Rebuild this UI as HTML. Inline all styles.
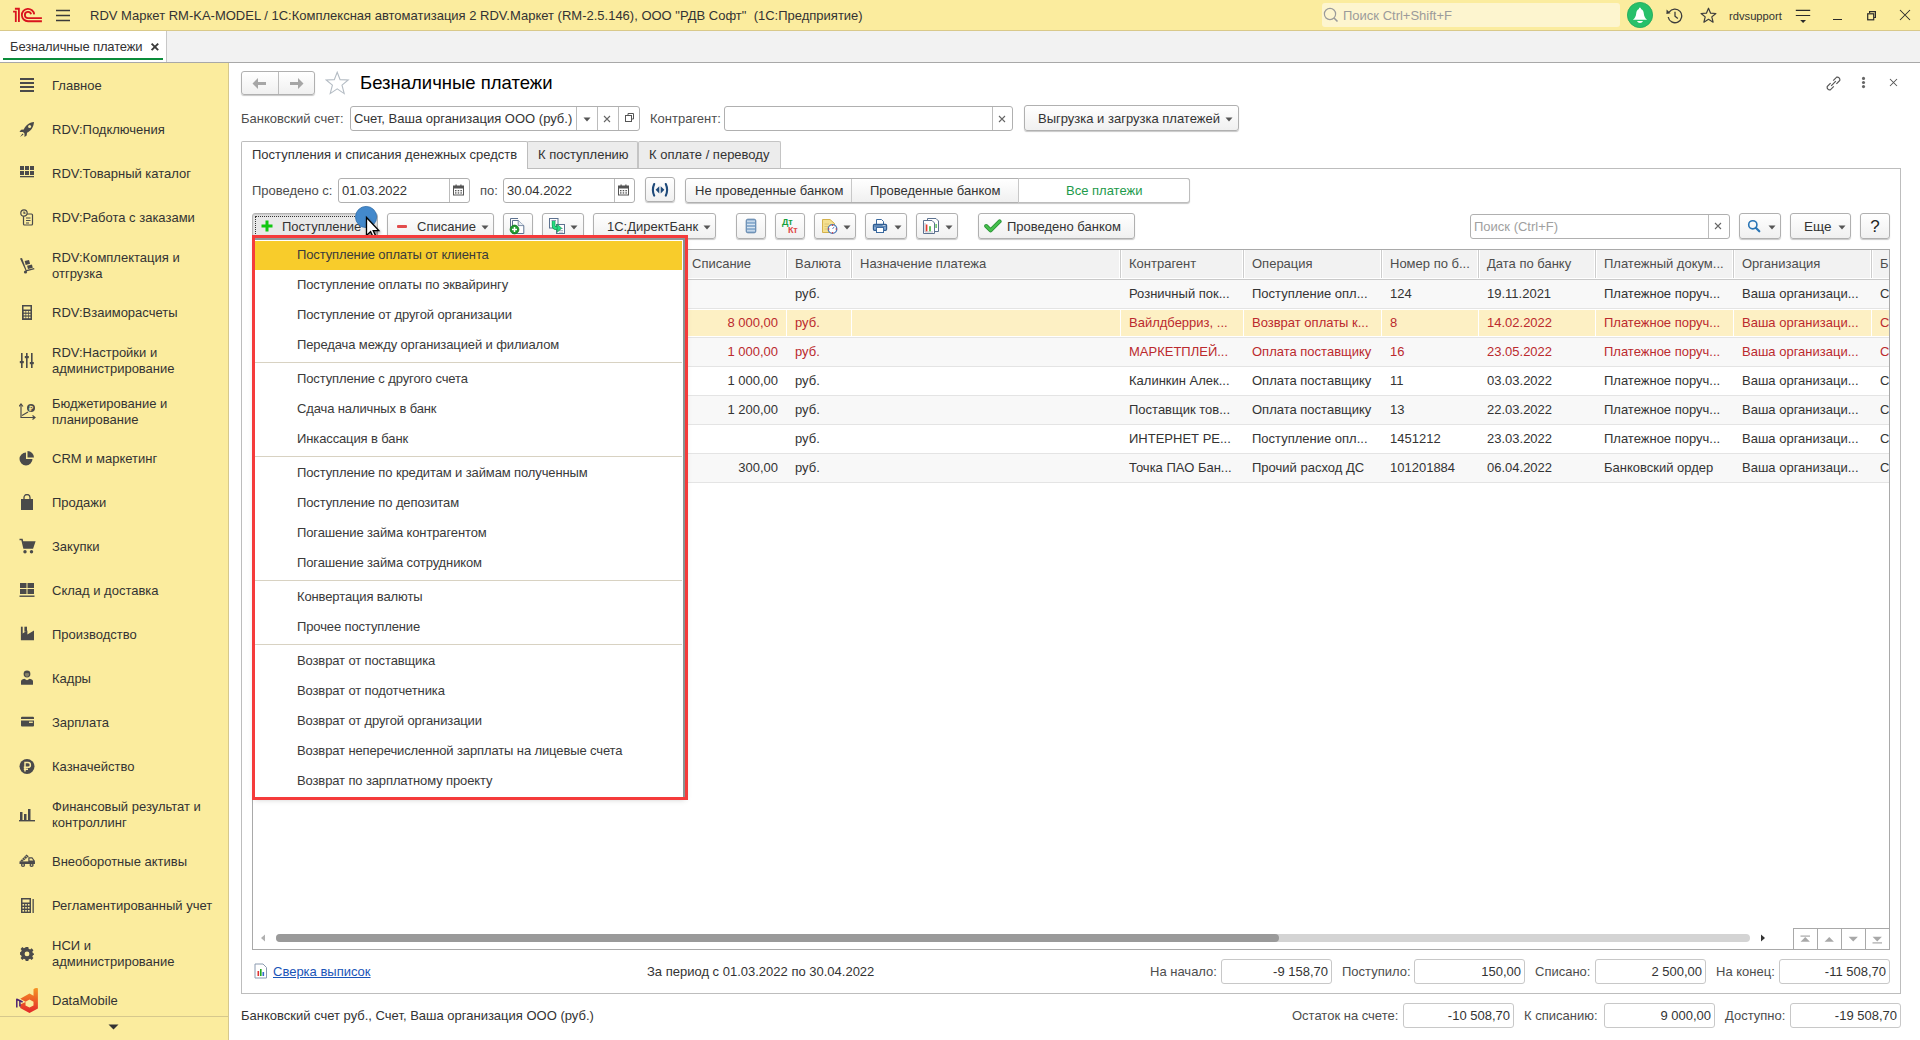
<!DOCTYPE html>
<html><head><meta charset="utf-8"><title>Безналичные платежи</title><style>
html,body{margin:0;padding:0;width:1920px;height:1040px;overflow:hidden;background:#fff;}
body{position:relative;font-family:"Liberation Sans",sans-serif;font-size:13px;color:#333;}
body>div{position:absolute;white-space:nowrap;}
</style></head><body>
<div style="left:0px;top:0px;width:1920px;height:30px;background:#fbec9e"></div>
<div style="left:0px;top:30px;width:1920px;height:1px;background:#d9c98a"></div>
<svg style="position:absolute;left:8px;top:2px;" width="40" height="26" viewBox="0 0 40 26">
<g fill="none" stroke="#d9141e" stroke-width="1.8" stroke-linecap="butt">
<path d="M5.1 9.7 H7.8 V20.1"/>
<path d="M6.9 6.75 H10.9 V20.1"/>
<path d="M26.2 12.3 A6.2 6.2 0 1 0 20 19.25 H33.9"/>
<path d="M23.1 12.3 A3.15 3.15 0 1 0 20 16.15 H33.9"/>
</g></svg>
<svg style="position:absolute;left:55px;top:9px;" width="16" height="13" viewBox="0 0 16 13"><g stroke="#3a3a3a" stroke-width="1.4"><path d="M1 1.5H15M1 6.5H15M1 11.5H15"/></g></svg>
<div style="left:90px;top:5.5px;line-height:20px;color:#333333;white-space:pre;font-size:13px">RDV Маркет RM-KA-MODEL / 1С:Комплексная автоматизация 2 RDV.Маркет (RM-2.5.146), ООО &quot;РДВ Софт&quot;  (1С:Предприятие)</div>
<div style="left:1322px;top:3px;width:298px;height:24px;background:#fdf5cf;border-radius:3px"></div>
<svg style="position:absolute;left:1323px;top:7px;" width="16" height="16" viewBox="0 0 16 16"><circle cx="7" cy="7" r="5.6" fill="none" stroke="#9a9a9a" stroke-width="1.2"/><path d="M11 11 L14.5 14.5" stroke="#9a9a9a" stroke-width="1.6"/></svg>
<div style="left:1343px;top:5.5px;line-height:20px;color:#9b9b9b;font-size:13px">Поиск Ctrl+Shift+F</div>
<svg style="position:absolute;left:1627px;top:2px;" width="26" height="26" viewBox="0 0 26 26"><circle cx="13" cy="13" r="12.6" fill="#27c06a" stroke="#1fa85a" stroke-width="0.8"/><path d="M12.9 5.4 C12.2 5.4 11.9 6.2 11.9 7.1 C10.1 7.8 9.4 9.5 9.2 11.5 C9 14.5 7.6 16.5 5.9 17.8 H20.1 C18.4 16.5 17 14.5 16.8 11.5 C16.6 9.5 15.9 7.8 14 7.1 C14 6.2 13.6 5.4 12.9 5.4Z" fill="#fff"/><path d="M10 19.1 H16 C15.5 20.4 14.3 20.9 13 20.9 C11.7 20.9 10.5 20.4 10 19.1Z" fill="#fff"/></svg>
<svg style="position:absolute;left:1665px;top:7px;" width="19" height="17" viewBox="0 0 19 17"><path d="M4.2 5.2 A6.8 6.8 0 1 1 3.2 10" fill="none" stroke="#3c3c3c" stroke-width="1.3"/><path d="M1.6 2.6 L5.6 6.2 L1.4 7 Z" fill="#3c3c3c"/><path d="M10 4.8 V9.2 L12.8 11.6" fill="none" stroke="#3c3c3c" stroke-width="1.3"/></svg>
<svg style="position:absolute;left:1700px;top:7px;" width="17" height="17" viewBox="0 0 17 17"><path d="M8.5 1.2 L10.6 6.2 L15.9 6.5 L11.8 9.9 L13.1 15.2 L8.5 12.3 L3.9 15.2 L5.2 9.9 L1.1 6.5 L6.4 6.2 Z" fill="none" stroke="#3c3c3c" stroke-width="1.2" stroke-linejoin="round"/></svg>
<div style="left:1729px;top:5.5px;line-height:20px;color:#333333;font-size:11.2px">rdvsupport</div>
<svg style="position:absolute;left:1795px;top:9px;" width="16" height="15" viewBox="0 0 16 15"><g stroke="#2a2a2a" stroke-width="1.2"><path d="M0.8 1.4 H15.2 M0.8 6.5 H15.2"/></g><path d="M5.2 11 H11 L8.1 14Z" fill="#2a2a2a"/></svg>
<div style="left:1833px;top:19px;width:9px;height:1px;background:#2a2a2a"></div>
<svg style="position:absolute;left:1866px;top:10px;" width="12" height="11" viewBox="0 0 12 11"><path d="M3.6 2.9 V1.7 H9.4 V7.5 H8.1" fill="none" stroke="#2a2a2a" stroke-width="1.2"/><rect x="1.7" y="3.8" width="6" height="6" fill="none" stroke="#2a2a2a" stroke-width="1.2"/></svg>
<svg style="position:absolute;left:1899px;top:9px;" width="12" height="12" viewBox="0 0 12 12"><path d="M1 1 L11 11 M11 1 L1 11" stroke="#2a2a2a" stroke-width="1.05"/></svg>
<div style="left:0px;top:31px;width:1920px;height:31px;background:#f2f2f2"></div>
<div style="left:0px;top:62px;width:1920px;height:1px;background:#a8a8a8"></div>
<div style="left:0px;top:31px;width:166px;height:31px;background:#fff"></div>
<div style="left:166px;top:31px;width:1px;height:31px;background:#c8c8c8"></div>
<div style="left:10px;top:36.5px;line-height:20px;color:#333333;font-size:13px;letter-spacing:-0.15px">Безналичные платежи</div>
<svg style="position:absolute;left:150px;top:42px;" width="10" height="10" viewBox="0 0 10 10"><path d="M1.6 1.6 L8.2 8.2 M8.2 1.6 L1.6 8.2" stroke="#3a3a3a" stroke-width="1.9"/></svg>
<div style="left:3px;top:58px;width:160px;height:2px;background:#0a8c3a"></div>
<div style="left:0px;top:63px;width:228px;height:977px;background:#fbec9e"></div>
<div style="left:228px;top:63px;width:1px;height:977px;background:#d6c88d"></div>
<div style="left:52px;top:76.0px;line-height:20px;color:#333333;font-size:13px">Главное</div>
<svg style="position:absolute;left:19px;top:77px;" width="17" height="17" viewBox="0 0 17 17"><g fill="#4a4a4a"><rect x="1" y="1" width="14" height="2"/><rect x="1" y="5" width="14" height="2"/><rect x="1" y="9" width="14" height="2"/><rect x="1" y="13" width="14" height="2"/></g></svg>
<div style="left:52px;top:120.0px;line-height:20px;color:#333333;font-size:13px">RDV:Подключения</div>
<svg style="position:absolute;left:19px;top:121px;" width="17" height="17" viewBox="0 0 17 17"><path d="M15 1 C10 1.5 6.5 4.5 4.8 8.5 L2 8.8 L0.5 11 L4 11 L5.5 12.5 L5.5 16 L7.7 14.5 L8 11.7 C12 10 14.5 6.5 15 1Z M3.5 12.5 L1 16 L4.5 13.5Z" fill="#4a4a4a"/><circle cx="10.6" cy="5.6" r="1.5" fill="#fbec9e"/></svg>
<div style="left:52px;top:164.0px;line-height:20px;color:#333333;font-size:13px">RDV:Товарный каталог</div>
<svg style="position:absolute;left:19px;top:165px;" width="17" height="17" viewBox="0 0 17 17"><g fill="#4a4a4a"><rect x="1" y="1" width="4" height="4"/><rect x="6" y="1" width="4" height="4"/><rect x="11" y="1" width="4" height="4"/><rect x="1" y="6" width="4" height="4"/><rect x="6" y="6" width="4" height="4"/><rect x="11" y="6" width="4" height="4"/><rect x="1" y="11" width="14" height="1.3"/></g></svg>
<div style="left:52px;top:208.0px;line-height:20px;color:#333333;font-size:13px">RDV:Работа с заказами</div>
<svg style="position:absolute;left:19px;top:209px;" width="17" height="17" viewBox="0 0 17 17"><g fill="none" stroke="#4a4a4a" stroke-width="1.2"><rect x="4.5" y="5" width="9" height="11" rx="1"/><circle cx="5" cy="4" r="3.2" fill="#fbec9e"/><path d="M5 2.5 V4.2 H6.5"/><path d="M7 9 H11.5 M7 11.5 H11.5 M7 14 H10"/></g></svg>
<div style="left:52px;top:250.0px;line-height:16px;color:#333333;font-size:13px">RDV:Комплектация и</div>
<div style="left:52px;top:266.0px;line-height:16px;color:#333333;font-size:13px">отгрузка</div>
<svg style="position:absolute;left:19px;top:257px;" width="17" height="17" viewBox="0 0 17 17"><g fill="#4a4a4a"><path d="M1 1.5 L3 1 L7.5 13 L15 11 L15.5 12.2 L7 14.5 Z"/><rect x="6" y="3.5" width="4.5" height="4" transform="rotate(-15 8 5)"/><rect x="8.5" y="8" width="5" height="3.5" transform="rotate(-15 11 10)"/><circle cx="6.5" cy="15" r="1.6"/></g></svg>
<div style="left:52px;top:303.0px;line-height:20px;color:#333333;font-size:13px">RDV:Взаиморасчеты</div>
<svg style="position:absolute;left:19px;top:304px;" width="17" height="17" viewBox="0 0 17 17"><g fill="#4a4a4a"><path d="M3 1 H13 V16 H3Z M4.5 2.5 V5.5 H11.5 V2.5Z"/></g><g fill="#fbec9e"><rect x="4.7" y="7" width="1.8" height="1.6"/><rect x="7.2" y="7" width="1.8" height="1.6"/><rect x="9.7" y="7" width="1.8" height="1.6"/><rect x="4.7" y="9.8" width="1.8" height="1.6"/><rect x="7.2" y="9.8" width="1.8" height="1.6"/><rect x="9.7" y="9.8" width="1.8" height="1.6"/><rect x="4.7" y="12.6" width="1.8" height="1.6"/><rect x="7.2" y="12.6" width="1.8" height="1.6"/><rect x="9.7" y="12.6" width="1.8" height="1.6"/></g></svg>
<div style="left:52px;top:345.0px;line-height:16px;color:#333333;font-size:13px">RDV:Настройки и</div>
<div style="left:52px;top:361.0px;line-height:16px;color:#333333;font-size:13px">администрирование</div>
<svg style="position:absolute;left:19px;top:352px;" width="17" height="17" viewBox="0 0 17 17"><g fill="#4a4a4a"><rect x="2" y="1" width="1.6" height="15"/><rect x="7" y="1" width="1.6" height="15"/><rect x="12" y="1" width="1.6" height="15"/><rect x="0.8" y="9" width="4" height="2.2"/><rect x="5.8" y="4" width="4" height="2.2"/><rect x="10.8" y="10" width="4" height="2.2"/></g></svg>
<div style="left:52px;top:396.0px;line-height:16px;color:#333333;font-size:13px">Бюджетирование и</div>
<div style="left:52px;top:412.0px;line-height:16px;color:#333333;font-size:13px">планирование</div>
<svg style="position:absolute;left:19px;top:403px;" width="17" height="17" viewBox="0 0 17 17"><g fill="none" stroke="#4a4a4a" stroke-width="1.2"><path d="M2 1 V14.5 H16"/><path d="M0 3.5 L2 1 L4 3.5"/><path d="M13.5 12.5 L16 14.5 L13.5 16.5"/><path d="M3 12.5 L9 9"/></g><circle cx="12" cy="5" r="4" fill="#4a4a4a"/><text x="12" y="7.5" font-size="7" text-anchor="middle" fill="#fbec9e" font-family="Liberation Sans" font-weight="bold">₽</text></svg>
<div style="left:52px;top:449.0px;line-height:20px;color:#333333;font-size:13px">CRM и маркетинг</div>
<svg style="position:absolute;left:19px;top:450px;" width="17" height="17" viewBox="0 0 17 17"><path d="M7 2.5 A6.5 6.5 0 1 0 13.5 9 L7 9 Z" fill="#4a4a4a"/><path d="M8.5 1 A6.5 6.5 0 0 1 15 7.5 L8.5 7.5Z" fill="#4a4a4a"/></svg>
<div style="left:52px;top:493.0px;line-height:20px;color:#333333;font-size:13px">Продажи</div>
<svg style="position:absolute;left:19px;top:494px;" width="17" height="17" viewBox="0 0 17 17"><path d="M2 5 H14 V16 H2Z" fill="#4a4a4a"/><path d="M5 7 V3.5 A3 3 0 0 1 11 3.5 V7" fill="none" stroke="#4a4a4a" stroke-width="1.3"/></svg>
<div style="left:52px;top:537.0px;line-height:20px;color:#333333;font-size:13px">Закупки</div>
<svg style="position:absolute;left:19px;top:538px;" width="17" height="17" viewBox="0 0 17 17"><path d="M0.5 1.5 H3 L5 10 H13.5 L15.5 4 H4" fill="none" stroke="#4a4a4a" stroke-width="1.6"/><path d="M4 4 H15.5 L13.5 10 H5.2Z" fill="#4a4a4a"/><circle cx="6" cy="13.8" r="1.7" fill="#4a4a4a"/><circle cx="12.5" cy="13.8" r="1.7" fill="#4a4a4a"/></svg>
<div style="left:52px;top:581.0px;line-height:20px;color:#333333;font-size:13px">Склад и доставка</div>
<svg style="position:absolute;left:19px;top:582px;" width="17" height="17" viewBox="0 0 17 17"><g fill="#4a4a4a"><rect x="1" y="1" width="6.5" height="5"/><rect x="8.5" y="1" width="6.5" height="5"/><rect x="1" y="7" width="6.5" height="5"/><rect x="8.5" y="7" width="6.5" height="5"/><rect x="0.5" y="13.5" width="15" height="1.4"/></g></svg>
<div style="left:52px;top:625.0px;line-height:20px;color:#333333;font-size:13px">Производство</div>
<svg style="position:absolute;left:19px;top:626px;" width="17" height="17" viewBox="0 0 17 17"><g fill="#4a4a4a"><rect x="1.9" y="0.7" width="1.8" height="8"/><rect x="5.4" y="0.7" width="2.6" height="5"/><path d="M1.9 14.3 V8.4 L8.4 4.4 V8.4 L15 4.6 V14.3Z"/></g></svg>
<div style="left:52px;top:669.0px;line-height:20px;color:#333333;font-size:13px">Кадры</div>
<svg style="position:absolute;left:19px;top:670px;" width="17" height="17" viewBox="0 0 17 17"><circle cx="8" cy="4" r="3.4" fill="#4a4a4a"/><path d="M2 14.2 V11.6 Q2 9.3 5.3 8.7 L8 10.2 L10.7 8.7 Q14 9.3 14 11.6 V14.2 Q14 14.7 13.5 14.7 H2.5 Q2 14.7 2 14.2Z" fill="#4a4a4a"/><path d="M6 3.6 Q8 2.4 10 3.6 V5 Q9.4 6.8 8 6.8 Q6.6 6.8 6 5Z" fill="#fbec9e" opacity="0.35"/></svg>
<div style="left:52px;top:713.0px;line-height:20px;color:#333333;font-size:13px">Зарплата</div>
<svg style="position:absolute;left:19px;top:714px;" width="17" height="17" viewBox="0 0 17 17"><rect x="2" y="2.8" width="13" height="9.8" rx="1" fill="#4a4a4a"/><rect x="2" y="5" width="13" height="1.5" fill="#fbec9e"/><rect x="10" y="7.6" width="3.8" height="1.3" fill="#fbec9e"/></svg>
<div style="left:52px;top:757.0px;line-height:20px;color:#333333;font-size:13px">Казначейство</div>
<svg style="position:absolute;left:19px;top:758px;" width="17" height="17" viewBox="0 0 17 17"><circle cx="8" cy="8.5" r="7.5" fill="#4a4a4a"/><path d="M6 13.5 V4.5 H9 A2.4 2.4 0 0 1 9 9.3 H4.8 M4.8 11.2 H9" fill="none" stroke="#fbec9e" stroke-width="1.5"/></svg>
<div style="left:52px;top:799.0px;line-height:16px;color:#333333;font-size:13px">Финансовый результат и</div>
<div style="left:52px;top:815.0px;line-height:16px;color:#333333;font-size:13px">контроллинг</div>
<svg style="position:absolute;left:19px;top:806px;" width="17" height="17" viewBox="0 0 17 17"><g fill="#4a4a4a"><rect x="1" y="6" width="2.5" height="9"/><rect x="5" y="8" width="2.5" height="7"/><rect x="9" y="3" width="2.5" height="12"/><rect x="0" y="14" width="16" height="1.4"/></g></svg>
<div style="left:52px;top:852.0px;line-height:20px;color:#333333;font-size:13px">Внеоборотные активы</div>
<svg style="position:absolute;left:19px;top:853px;" width="17" height="17" viewBox="0 0 17 17"><g fill="#4a4a4a"><path d="M0.8 8.6 L7.4 1.4 L9.8 3.3 L3.8 8.6Z"/><path d="M9.3 4.3 H13.3 L15.8 7.8 V11 H9.3Z"/><rect x="0.5" y="8.4" width="15.3" height="2.6"/><circle cx="4" cy="12" r="2.1"/><circle cx="12.6" cy="12" r="2.1"/></g><g stroke="#fbec9e" stroke-width="0.7"><path d="M3.2 6.4 L5 7.6 M4.8 4.7 L6.6 5.9 M6.4 3 L8.2 4.2"/></g><path d="M10.5 5.4 H12.8 L14.3 7.6 H10.5Z" fill="#fbec9e"/><circle cx="4" cy="12" r="0.8" fill="#fbec9e"/><circle cx="12.6" cy="12" r="0.8" fill="#fbec9e"/></svg>
<div style="left:52px;top:896.0px;line-height:20px;color:#333333;font-size:13px">Регламентированный учет</div>
<svg style="position:absolute;left:19px;top:897px;" width="17" height="17" viewBox="0 0 17 17"><path d="M2 1 H12 V16 H2Z" fill="#4a4a4a"/><rect x="3.5" y="2.5" width="7" height="3" fill="#fbec9e"/><g fill="#fbec9e"><rect x="3.5" y="7" width="1.6" height="1.6"/><rect x="6.2" y="7" width="1.6" height="1.6"/><rect x="8.9" y="7" width="1.6" height="1.6"/><rect x="3.5" y="10" width="1.6" height="1.6"/><rect x="6.2" y="10" width="1.6" height="1.6"/><rect x="8.9" y="10" width="1.6" height="1.6"/><rect x="3.5" y="13" width="1.6" height="1.6"/><rect x="6.2" y="13" width="1.6" height="1.6"/><rect x="8.9" y="13" width="1.6" height="1.6"/></g><rect x="13.5" y="2" width="1.3" height="14" fill="#4a4a4a"/></svg>
<div style="left:52px;top:938.0px;line-height:16px;color:#333333;font-size:13px">НСИ и</div>
<div style="left:52px;top:954.0px;line-height:16px;color:#333333;font-size:13px">администрирование</div>
<svg style="position:absolute;left:19px;top:945px;" width="17" height="17" viewBox="0 0 17 17"><g transform="translate(8 8.5) scale(0.87)"><path d="M-1.5 -7.5 H1.5 L1.9 -5.4 L3.6 -4.6 L5.3 -5.9 L7.4 -3.8 L6.1 -2.1 L6.8 -0.4 L8 0 V1.5 L6.8 1.9 L6.1 3.6 L7.4 5.3 L5.3 7.4 L3.6 6.1 L1.9 6.8 L1.5 8.5 H-1.5 L-1.9 6.8 L-3.6 6.1 L-5.3 7.4 L-7.4 5.3 L-6.1 3.6 L-6.8 1.9 L-8 1.5 V-1.5 L-6.8 -1.9 L-6.1 -3.6 L-7.4 -5.3 L-5.3 -7.4 L-3.6 -6.1 L-1.9 -6.8Z" fill="#4a4a4a"/><circle cx="0" cy="0.5" r="2.8" fill="#fbec9e"/></g></svg>
<div style="left:52px;top:991.0px;line-height:20px;color:#333333;font-size:13px">DataMobile</div>
<svg style="position:absolute;left:15px;top:986px;" width="25" height="28" viewBox="0 0 25 28"><defs><linearGradient id="dmg" x1="0" y1="0" x2="0" y2="1"><stop offset="0" stop-color="#f59424"/><stop offset="1" stop-color="#e3262a"/></linearGradient></defs><path d="M18.5 3.2 Q20.5 1.5 22.9 2.2 V22.5 L14.5 27 L5.2 22 V18.6 L10.5 16 V19.4 L14.5 21.6 L18.5 19.4 V15.8 L14.5 13.6 L10.5 15.8 L5.2 12.8 L14.5 7.5 L18.5 9.8Z" fill="url(#dmg)"/><g fill="none" stroke="#4e2270" stroke-width="1.5" stroke-linejoin="round"><path d="M1.8 21.5 V13.3 L7.6 16"/><path d="M4.9 20.5 V14.8"/></g></svg>
<div style="left:0px;top:1016px;width:228px;height:1px;background:#d6c88d"></div>
<svg style="position:absolute;left:108px;top:1024px;" width="12" height="7" viewBox="0 0 12 7"><path d="M0.5 0.5 H10.5 L5.5 5.5Z" fill="#333"/></svg>
<div style="left:241px;top:71px;width:74px;height:24px;border:1px solid #b0b0b0;border-radius:3px;background:linear-gradient(#ffffff,#f0f0f0);box-shadow:0 1px 1px rgba(0,0,0,0.22);box-sizing:border-box;"></div>
<div style="left:278px;top:72px;width:1px;height:22px;background:#bcbcbc"></div>
<svg style="position:absolute;left:252px;top:77px;" width="16" height="13" viewBox="0 0 16 13"><path d="M0.5 6.5 L6 1 V5 H14 V8 H6 V12Z" fill="#a6a6a6"/></svg>
<svg style="position:absolute;left:288px;top:77px;" width="16" height="13" viewBox="0 0 16 13"><path d="M15.5 6.5 L10 1 V5 H2 V8 H10 V12Z" fill="#a6a6a6"/></svg>
<svg style="position:absolute;left:325px;top:71px;" width="25" height="24" viewBox="0 0 25 24"><path d="M12.2 1.2 L15.1 8.6 L23.2 9 L17 14.1 L19.2 22.6 L12.2 17.9 L5.2 22.6 L7.4 14.1 L1.2 9 L9.3 8.6 Z" fill="none" stroke="#b4bcc4" stroke-width="1.1" stroke-linejoin="miter"/></svg>
<div style="left:360px;top:70.0px;line-height:26px;color:#000;font-size:18.5px">Безналичные платежи</div>
<svg style="position:absolute;left:1824px;top:74px;" width="19" height="19" viewBox="0 0 19 19"><g fill="none" stroke="#555" stroke-width="1.2"><path d="M7.2 11.8 L11.8 7.2"/><path d="M6.6 9.2 L3.2 12.6 A2.6 2.6 0 0 0 6.4 15.8 L9.8 12.4"/><path d="M9.2 6.6 L12.6 3.2 A2.6 2.6 0 0 1 15.8 6.4 L12.4 9.8"/></g></svg>
<svg style="position:absolute;left:1861px;top:75px;" width="5" height="15" viewBox="0 0 5 15"><circle cx="2.5" cy="3.4" r="1.55" fill="#666"/><circle cx="2.5" cy="7.5" r="1.55" fill="#666"/><circle cx="2.5" cy="11.6" r="1.55" fill="#666"/></svg>
<svg style="position:absolute;left:1889px;top:78px;" width="10" height="10" viewBox="0 0 10 10"><path d="M1 1 L8 8 M8 1 L1 8" stroke="#555" stroke-width="1.05"/></svg>
<div style="left:241px;top:108.5px;line-height:20px;color:#4d4d4d;font-size:13px">Банковский счет:</div>
<div style="left:350px;top:106px;width:290px;height:25px;border:1px solid #b0b0b0;border-radius:3px;background:#fff;box-sizing:border-box;"></div>
<div style="left:354px;top:108.5px;line-height:20px;color:#333333;font-size:13px">Счет, Ваша организация ООО (руб.)</div>
<div style="left:576px;top:107px;width:1px;height:23px;background:#bcbcbc"></div>
<div style="left:597px;top:107px;width:1px;height:23px;background:#bcbcbc"></div>
<div style="left:618px;top:107px;width:1px;height:23px;background:#bcbcbc"></div>
<svg style="position:absolute;left:583px;top:116.5px;" width="8" height="5" viewBox="0 0 8 5"><path d="M0.5 0.5 L7.5 0.5 L4 4.5 Z" fill="#555"/></svg>
<svg style="position:absolute;left:603px;top:115px;" width="8" height="8" viewBox="0 0 8 8"><path d="M1 1 L7 7 M7 1 L1 7" stroke="#666" stroke-width="1.1"/></svg>
<svg style="position:absolute;left:624px;top:112px;" width="11" height="11" viewBox="0 0 11 11"><g fill="none" stroke="#555" stroke-width="1"><rect x="1.5" y="3.5" width="6" height="6"/><path d="M4 3.5 V1.5 H9.5 V7 H7.5"/></g></svg>
<div style="left:650px;top:108.5px;line-height:20px;color:#4d4d4d;font-size:13px">Контрагент:</div>
<div style="left:724px;top:106px;width:289px;height:25px;border:1px solid #b0b0b0;border-radius:3px;background:#fff;box-sizing:border-box;"></div>
<div style="left:992px;top:107px;width:1px;height:23px;background:#bcbcbc"></div>
<svg style="position:absolute;left:998px;top:115px;" width="8" height="8" viewBox="0 0 8 8"><path d="M1 1 L7 7 M7 1 L1 7" stroke="#666" stroke-width="1.1"/></svg>
<div style="left:1024px;top:105px;width:215px;height:26px;border:1px solid #b0b0b0;border-radius:3px;background:linear-gradient(#ffffff,#f0f0f0);box-shadow:0 1px 1px rgba(0,0,0,0.22);box-sizing:border-box;"></div>
<div style="left:1038px;top:108.5px;line-height:20px;color:#333333;font-size:13px">Выгрузка и загрузка платежей</div>
<svg style="position:absolute;left:1225px;top:116.5px;" width="8" height="5" viewBox="0 0 8 5"><path d="M0.5 0.5 L7.5 0.5 L4 4.5 Z" fill="#555"/></svg>
<div style="left:527px;top:141px;width:111px;height:27px;background:#ececec;border:1px solid #c4c4c4;border-bottom:none;box-sizing:border-box;border-radius:2px 2px 0 0"></div>
<div style="left:638px;top:141px;width:143px;height:27px;background:#ececec;border:1px solid #c4c4c4;border-bottom:none;box-sizing:border-box;border-radius:2px 2px 0 0"></div>
<div style="left:241px;top:141px;width:287px;height:28px;background:#fff;border:1px solid #bdbdbd;border-bottom:none;box-sizing:border-box;border-radius:2px 2px 0 0"></div>
<div style="left:252px;top:144.5px;line-height:20px;color:#333333;font-size:13px">Поступления и списания денежных средств</div>
<div style="left:538px;top:144.5px;line-height:20px;color:#333333;font-size:13px">К поступлению</div>
<div style="left:649px;top:144.5px;line-height:20px;color:#333333;font-size:13px">К оплате / переводу</div>
<div style="left:781px;top:168px;width:1120px;height:1px;background:#bdbdbd"></div>
<div style="left:527px;top:168px;width:254px;height:1px;background:#bdbdbd"></div>
<div style="left:241px;top:168px;width:1px;height:826px;background:#bdbdbd"></div>
<div style="left:1900px;top:168px;width:1px;height:826px;background:#bdbdbd"></div>
<div style="left:241px;top:993px;width:1660px;height:1px;background:#bdbdbd"></div>
<div style="left:252px;top:180.5px;line-height:20px;color:#4d4d4d;font-size:13px">Проведено с:</div>
<div style="left:338px;top:178px;width:132px;height:25px;border:1px solid #b0b0b0;border-radius:3px;background:#fff;box-sizing:border-box;"></div>
<div style="left:342px;top:180.5px;line-height:20px;color:#333333;font-size:13px">01.03.2022</div>
<div style="left:449px;top:179px;width:1px;height:23px;background:#bcbcbc"></div>
<svg style="position:absolute;left:453px;top:184px;" width="11" height="12" viewBox="0 0 11 12"><g fill="#555"><rect x="0.5" y="2" width="10" height="9" fill="none" stroke="#555" stroke-width="1"/><rect x="0.5" y="2" width="10" height="2.5"/><rect x="2.5" y="0.5" width="1.2" height="2.5"/><rect x="7.3" y="0.5" width="1.2" height="2.5"/><rect x="2" y="6" width="1.5" height="1.3"/><rect x="4.7" y="6" width="1.5" height="1.3"/><rect x="7.4" y="6" width="1.5" height="1.3"/><rect x="2" y="8.3" width="1.5" height="1.3"/><rect x="4.7" y="8.3" width="1.5" height="1.3"/><rect x="7.4" y="8.3" width="1.5" height="1.3"/></g></svg>
<div style="left:480px;top:180.5px;line-height:20px;color:#4d4d4d;font-size:13px">по:</div>
<div style="left:503px;top:178px;width:132px;height:25px;border:1px solid #b0b0b0;border-radius:3px;background:#fff;box-sizing:border-box;"></div>
<div style="left:507px;top:180.5px;line-height:20px;color:#333333;font-size:13px">30.04.2022</div>
<div style="left:614px;top:179px;width:1px;height:23px;background:#bcbcbc"></div>
<svg style="position:absolute;left:618px;top:184px;" width="11" height="12" viewBox="0 0 11 12"><g fill="#555"><rect x="0.5" y="2" width="10" height="9" fill="none" stroke="#555" stroke-width="1"/><rect x="0.5" y="2" width="10" height="2.5"/><rect x="2.5" y="0.5" width="1.2" height="2.5"/><rect x="7.3" y="0.5" width="1.2" height="2.5"/><rect x="2" y="6" width="1.5" height="1.3"/><rect x="4.7" y="6" width="1.5" height="1.3"/><rect x="7.4" y="6" width="1.5" height="1.3"/><rect x="2" y="8.3" width="1.5" height="1.3"/><rect x="4.7" y="8.3" width="1.5" height="1.3"/><rect x="7.4" y="8.3" width="1.5" height="1.3"/></g></svg>
<div style="left:645px;top:177px;width:30px;height:25px;border:1px solid #b0b0b0;border-radius:3px;background:linear-gradient(#ffffff,#f0f0f0);box-shadow:0 1px 1px rgba(0,0,0,0.22);box-sizing:border-box;"></div>
<svg style="position:absolute;left:649px;top:182px;" width="22" height="16" viewBox="0 0 22 16"><g fill="none" stroke="#1f4a7a" stroke-width="2.1" stroke-linecap="round"><path d="M5.2 2 Q2.6 7.8 5.2 13.6"/><path d="M16.8 2 Q19.4 7.8 16.8 13.6"/></g><path d="M6.6 7.8 L10.3 4.2 V11.4Z M15.4 7.8 L11.7 4.2 V11.4Z" fill="#1f4a7a"/></svg>
<div style="left:685px;top:178px;width:505px;height:25px;border:1px solid #b0b0b0;border-radius:3px;background:linear-gradient(#ffffff,#f0f0f0);box-shadow:0 1px 1px rgba(0,0,0,0.22);box-sizing:border-box;"></div>
<div style="left:851px;top:179px;width:1px;height:23px;background:#c8c8c8"></div>
<div style="left:1018px;top:178px;width:172px;height:25px;background:#fff;border:1px solid #bdbdbd;border-left:1px solid #c8c8c8;border-radius:0 3px 3px 0;box-sizing:border-box"></div>
<div style="left:695px;top:180.5px;line-height:20px;color:#333333;font-size:13px">Не проведенные банком</div>
<div style="left:870px;top:180.5px;line-height:20px;color:#333333;font-size:13px">Проведенные банком</div>
<div style="left:1066px;top:180.5px;line-height:20px;color:#1d9a4b;font-size:13px">Все платежи</div>
<div style="left:252px;top:213px;width:126px;height:26px;border:1px solid #b5b5b5;border-radius:3px;background:#e9e9e9;box-sizing:border-box;box-shadow:inset 0 1px 2px rgba(0,0,0,0.15)"></div>
<div style="left:255px;top:216px;width:118px;height:22px;border:1px dotted #333;box-sizing:border-box"></div>
<svg style="position:absolute;left:261px;top:220px;" width="12" height="12" viewBox="0 0 12 12"><path d="M4.5 0.5 H7.5 V4.5 H11.5 V7.5 H7.5 V11.5 H4.5 V7.5 H0.5 V4.5 H4.5Z" fill="#11c811"/></svg>
<div style="left:282px;top:216.5px;line-height:20px;color:#333333;font-size:13px">Поступление</div>
<div style="left:387px;top:213px;width:107px;height:26px;border:1px solid #b0b0b0;border-radius:3px;background:linear-gradient(#ffffff,#f0f0f0);box-shadow:0 1px 1px rgba(0,0,0,0.22);box-sizing:border-box;"></div>
<div style="left:397px;top:225px;width:10px;height:3px;background:#e24b4b;border-radius:1px"></div>
<div style="left:417px;top:216.5px;line-height:20px;color:#333333;font-size:13px">Списание</div>
<svg style="position:absolute;left:481px;top:225px;" width="8" height="5" viewBox="0 0 8 5"><path d="M0.5 0.5 L7.5 0.5 L4 4.5 Z" fill="#555"/></svg>
<div style="left:503px;top:213px;width:30px;height:26px;border:1px solid #b0b0b0;border-radius:3px;background:linear-gradient(#ffffff,#f0f0f0);box-shadow:0 1px 1px rgba(0,0,0,0.22);box-sizing:border-box;"></div>
<svg style="position:absolute;left:508px;top:216px;" width="20" height="20" viewBox="0 0 20 20"><path d="M2.5 12 V2.5 H10" fill="none" stroke="#5d7290" stroke-width="1"/><path d="M4.5 4.5 H10.2 L15.8 9.6 V17.5 H4.5 Z" fill="#fff" stroke="#5d7290" stroke-width="1"/><path d="M10.2 4.5 V9.6 H15.8" fill="#e8edf3" stroke="#5d7290" stroke-width="0.8"/><circle cx="6.5" cy="13.5" r="4.4" fill="#1f9a2e" stroke="#157a22" stroke-width="0.8"/><path d="M6.5 11 V16 M4 13.5 H9" stroke="#fff" stroke-width="1.5"/></svg>
<div style="left:542px;top:213px;width:42px;height:26px;border:1px solid #b0b0b0;border-radius:3px;background:linear-gradient(#ffffff,#f0f0f0);box-shadow:0 1px 1px rgba(0,0,0,0.22);box-sizing:border-box;"></div>
<svg style="position:absolute;left:547px;top:216px;" width="20" height="20" viewBox="0 0 20 20"><rect x="2.5" y="2.5" width="8.5" height="9.5" fill="#fff" stroke="#5d7290"/><path d="M4.5 4.5 H9" stroke="#8a9ab0"/><rect x="9.5" y="8.5" width="8" height="9" fill="#fff" stroke="#5d7290"/><path d="M12 12.5 H16 M12 14.5 H16 M12 16.2 H16" stroke="#9aa8ba" stroke-width="0.8"/><path d="M6.6 5 V9.6 Q6.6 12.2 9.4 12.2 H10.5" fill="none" stroke="#169a52" stroke-width="3.6"/><path d="M6.6 5 V9.6 Q6.6 12.2 9.4 12.2 H10.5" fill="none" stroke="#26dc84" stroke-width="2.2"/><path d="M10.2 8.2 L14.6 12.2 L10.2 16.2 Z" fill="#26dc84" stroke="#169a52" stroke-width="0.8"/></svg>
<svg style="position:absolute;left:570px;top:225px;" width="8" height="5" viewBox="0 0 8 5"><path d="M0.5 0.5 L7.5 0.5 L4 4.5 Z" fill="#555"/></svg>
<div style="left:593px;top:213px;width:123px;height:26px;border:1px solid #b0b0b0;border-radius:3px;background:linear-gradient(#ffffff,#f0f0f0);box-shadow:0 1px 1px rgba(0,0,0,0.22);box-sizing:border-box;"></div>
<div style="left:607px;top:216.5px;line-height:20px;color:#333333;font-size:13px">1С:ДиректБанк</div>
<svg style="position:absolute;left:703px;top:225px;" width="8" height="5" viewBox="0 0 8 5"><path d="M0.5 0.5 L7.5 0.5 L4 4.5 Z" fill="#555"/></svg>
<div style="left:736px;top:213px;width:30px;height:26px;border:1px solid #b0b0b0;border-radius:3px;background:linear-gradient(#ffffff,#f0f0f0);box-shadow:0 1px 1px rgba(0,0,0,0.22);box-sizing:border-box;"></div>
<svg style="position:absolute;left:745px;top:218px;" width="12" height="16" viewBox="0 0 12 16"><rect x="1.2" y="1.2" width="9.6" height="13.6" rx="1.6" fill="#8caed0" stroke="#5b80a8" stroke-width="1"/><path d="M2 3.2 H10 M2 6.4 H10 M2 9.6 H10 M2 12.8 H10" stroke="#e8f0f8" stroke-width="0.9"/></svg>
<div style="left:775px;top:213px;width:30px;height:26px;border:1px solid #b0b0b0;border-radius:3px;background:linear-gradient(#ffffff,#f0f0f0);box-shadow:0 1px 1px rgba(0,0,0,0.22);box-sizing:border-box;"></div>
<div style="left:782px;top:217px;font-size:9px;line-height:10px;color:#14a03c;font-weight:bold;letter-spacing:-0.2px">Дт</div>
<div style="left:788px;top:225px;font-size:9px;line-height:10px;color:#e04848;font-weight:bold;letter-spacing:-0.2px">Кт</div>
<div style="left:814px;top:213px;width:42px;height:26px;border:1px solid #b0b0b0;border-radius:3px;background:linear-gradient(#ffffff,#f0f0f0);box-shadow:0 1px 1px rgba(0,0,0,0.22);box-sizing:border-box;"></div>
<svg style="position:absolute;left:820px;top:217px;" width="20" height="20" viewBox="0 0 20 20"><path d="M2.5 2.5 H10 L14.5 6.5 V15.5 H2.5 Z" fill="#f5e08f" stroke="#d4b24c" stroke-width="1"/><path d="M4.5 7 H9 M4.5 9.5 H8 M4.5 12 H7" stroke="#dcc070" stroke-width="0.9"/><circle cx="12.5" cy="12" r="4.3" fill="#fff" stroke="#4a78b8" stroke-width="1.3"/><g fill="#e03030"><circle cx="12.5" cy="8.3" r="0.7"/><circle cx="12.5" cy="15.7" r="0.7"/><circle cx="8.8" cy="12" r="0.7"/><circle cx="16.2" cy="12" r="0.7"/></g><path d="M12.5 12 L14.2 9.8" stroke="#4a78b8" stroke-width="0.9"/></svg>
<svg style="position:absolute;left:843px;top:225px;" width="8" height="5" viewBox="0 0 8 5"><path d="M0.5 0.5 L7.5 0.5 L4 4.5 Z" fill="#555"/></svg>
<div style="left:865px;top:213px;width:42px;height:26px;border:1px solid #b0b0b0;border-radius:3px;background:linear-gradient(#ffffff,#f0f0f0);box-shadow:0 1px 1px rgba(0,0,0,0.22);box-sizing:border-box;"></div>
<svg style="position:absolute;left:871px;top:217px;" width="18" height="18" viewBox="0 0 18 18"><path d="M5.5 2.5 H10.5 L12.5 4.5 V8 H5.5 Z" fill="#fff" stroke="#3b6aa0" stroke-width="1"/><rect x="2.4" y="7.4" width="13.2" height="6" rx="1.2" fill="#7fa4cf" stroke="#2f5d92" stroke-width="1.2"/><path d="M3.2 9 H14.8" stroke="#2f5d92" stroke-width="0.8"/><circle cx="12.2" cy="8.6" r="0.5" fill="#fff"/><circle cx="13.8" cy="8.6" r="0.5" fill="#fff"/><rect x="5.5" y="10.5" width="7" height="5" fill="#fff" stroke="#3b6aa0" stroke-width="1"/></svg>
<svg style="position:absolute;left:894px;top:225px;" width="8" height="5" viewBox="0 0 8 5"><path d="M0.5 0.5 L7.5 0.5 L4 4.5 Z" fill="#555"/></svg>
<div style="left:916px;top:213px;width:42px;height:26px;border:1px solid #b0b0b0;border-radius:3px;background:linear-gradient(#ffffff,#f0f0f0);box-shadow:0 1px 1px rgba(0,0,0,0.22);box-sizing:border-box;"></div>
<svg style="position:absolute;left:921px;top:216px;" width="20" height="20" viewBox="0 0 20 20"><path d="M6.5 2.5 H15 L17.5 5 V15.5 H6.5 Z" fill="#fff" stroke="#5d7290" stroke-width="1"/><path d="M2.5 4.5 H11 L13.5 7 V17.5 H2.5 Z" fill="#fff" stroke="#5d7290" stroke-width="1"/><path d="M4 7 V16 H12" fill="none" stroke="#8a96a8" stroke-width="0.6"/><rect x="4.8" y="8.5" width="1.6" height="6.8" fill="#e83a2a"/><rect x="8.2" y="10.2" width="1.6" height="5.1" fill="#3ab43a"/><rect x="14.5" y="8" width="1.2" height="4" fill="#3ab43a"/></svg>
<svg style="position:absolute;left:945px;top:225px;" width="8" height="5" viewBox="0 0 8 5"><path d="M0.5 0.5 L7.5 0.5 L4 4.5 Z" fill="#555"/></svg>
<div style="left:978px;top:213px;width:157px;height:26px;border:1px solid #b0b0b0;border-radius:3px;background:linear-gradient(#ffffff,#f0f0f0);box-shadow:0 1px 1px rgba(0,0,0,0.22);box-sizing:border-box;"></div>
<svg style="position:absolute;left:984px;top:218px;" width="18" height="15" viewBox="0 0 18 15"><path d="M2.2 8 L6.6 12.4 L15.6 3.4" fill="none" stroke="#2a9236" stroke-width="4" stroke-linejoin="round" stroke-linecap="round"/><path d="M2.2 8 L6.6 12.4 L15.6 3.4" fill="none" stroke="#45c04c" stroke-width="2.3" stroke-linejoin="round" stroke-linecap="round"/></svg>
<div style="left:1007px;top:216.5px;line-height:20px;color:#333333;font-size:13px">Проведено банком</div>
<div style="left:1470px;top:214px;width:260px;height:25px;border:1px solid #b0b0b0;border-radius:3px;background:#fff;box-sizing:border-box;"></div>
<div style="left:1474px;top:216.5px;line-height:20px;color:#a0a0a0;font-size:13px">Поиск (Ctrl+F)</div>
<div style="left:1708px;top:215px;width:1px;height:23px;background:#bcbcbc"></div>
<svg style="position:absolute;left:1714px;top:222px;" width="8" height="8" viewBox="0 0 8 8"><path d="M1 1 L7 7 M7 1 L1 7" stroke="#666" stroke-width="1.1"/></svg>
<div style="left:1739px;top:213px;width:42px;height:26px;border:1px solid #b0b0b0;border-radius:3px;background:linear-gradient(#ffffff,#f0f0f0);box-shadow:0 1px 1px rgba(0,0,0,0.22);box-sizing:border-box;"></div>
<svg style="position:absolute;left:1747px;top:219px;" width="14" height="14" viewBox="0 0 14 14"><circle cx="5.8" cy="5.8" r="4.1" fill="none" stroke="#2a75b5" stroke-width="1.6"/><path d="M8.8 8.8 L12.3 12.3" stroke="#2a75b5" stroke-width="2.2" stroke-linecap="round"/></svg>
<svg style="position:absolute;left:1768px;top:225px;" width="8" height="5" viewBox="0 0 8 5"><path d="M0.5 0.5 L7.5 0.5 L4 4.5 Z" fill="#555"/></svg>
<div style="left:1790px;top:213px;width:61px;height:26px;border:1px solid #b0b0b0;border-radius:3px;background:linear-gradient(#ffffff,#f0f0f0);box-shadow:0 1px 1px rgba(0,0,0,0.22);box-sizing:border-box;"></div>
<div style="left:1804px;top:216.5px;line-height:20px;color:#333333;font-size:13.5px">Еще</div>
<svg style="position:absolute;left:1838px;top:225px;" width="8" height="5" viewBox="0 0 8 5"><path d="M0.5 0.5 L7.5 0.5 L4 4.5 Z" fill="#555"/></svg>
<div style="left:1860px;top:213px;width:30px;height:26px;border:1px solid #b0b0b0;border-radius:3px;background:linear-gradient(#ffffff,#f0f0f0);box-shadow:0 1px 1px rgba(0,0,0,0.22);box-sizing:border-box;"></div>
<div style="left:1860px;top:216.5px;line-height:20px;width:30px;text-align:center;color:#222;font-size:17px">?</div>
<div style="left:252px;top:249px;width:1638px;height:701px;border:1px solid #a9a9a9;box-sizing:border-box;background:#fff"></div>
<div style="left:253px;top:250px;width:1636px;height:29px;background:#f2f2f2"></div>
<div style="left:253px;top:279px;width:1636px;height:1px;background:#c9c9c9"></div>
<div style="left:683px;top:250px;width:1px;height:28px;background:#ffffff"></div>
<div style="left:684px;top:250px;width:1px;height:29px;background:#cdcdcd"></div>
<div style="left:685px;top:250px;width:1px;height:28px;background:#ffffff"></div>
<div style="left:785px;top:250px;width:1px;height:28px;background:#ffffff"></div>
<div style="left:786px;top:250px;width:1px;height:29px;background:#cdcdcd"></div>
<div style="left:787px;top:250px;width:1px;height:28px;background:#ffffff"></div>
<div style="left:850px;top:250px;width:1px;height:28px;background:#ffffff"></div>
<div style="left:851px;top:250px;width:1px;height:29px;background:#cdcdcd"></div>
<div style="left:852px;top:250px;width:1px;height:28px;background:#ffffff"></div>
<div style="left:1119px;top:250px;width:1px;height:28px;background:#ffffff"></div>
<div style="left:1120px;top:250px;width:1px;height:29px;background:#cdcdcd"></div>
<div style="left:1121px;top:250px;width:1px;height:28px;background:#ffffff"></div>
<div style="left:1242px;top:250px;width:1px;height:28px;background:#ffffff"></div>
<div style="left:1243px;top:250px;width:1px;height:29px;background:#cdcdcd"></div>
<div style="left:1244px;top:250px;width:1px;height:28px;background:#ffffff"></div>
<div style="left:1380px;top:250px;width:1px;height:28px;background:#ffffff"></div>
<div style="left:1381px;top:250px;width:1px;height:29px;background:#cdcdcd"></div>
<div style="left:1382px;top:250px;width:1px;height:28px;background:#ffffff"></div>
<div style="left:1477px;top:250px;width:1px;height:28px;background:#ffffff"></div>
<div style="left:1478px;top:250px;width:1px;height:29px;background:#cdcdcd"></div>
<div style="left:1479px;top:250px;width:1px;height:28px;background:#ffffff"></div>
<div style="left:1594px;top:250px;width:1px;height:28px;background:#ffffff"></div>
<div style="left:1595px;top:250px;width:1px;height:29px;background:#cdcdcd"></div>
<div style="left:1596px;top:250px;width:1px;height:28px;background:#ffffff"></div>
<div style="left:1732px;top:250px;width:1px;height:28px;background:#ffffff"></div>
<div style="left:1733px;top:250px;width:1px;height:29px;background:#cdcdcd"></div>
<div style="left:1734px;top:250px;width:1px;height:28px;background:#ffffff"></div>
<div style="left:1870px;top:250px;width:1px;height:28px;background:#ffffff"></div>
<div style="left:1871px;top:250px;width:1px;height:29px;background:#cdcdcd"></div>
<div style="left:1872px;top:250px;width:1px;height:28px;background:#ffffff"></div>
<div style="left:253px;top:278px;width:1636px;height:1px;background:#ffffff"></div>
<div style="left:692px;top:253.5px;line-height:20px;color:#4d4d4d;font-size:13px;white-space:nowrap">Списание</div>
<div style="left:795px;top:253.5px;line-height:20px;color:#4d4d4d;font-size:13px;white-space:nowrap">Валюта</div>
<div style="left:860px;top:253.5px;line-height:20px;color:#4d4d4d;font-size:13px;white-space:nowrap">Назначение платежа</div>
<div style="left:1129px;top:253.5px;line-height:20px;color:#4d4d4d;font-size:13px;white-space:nowrap">Контрагент</div>
<div style="left:1252px;top:253.5px;line-height:20px;color:#4d4d4d;font-size:13px;white-space:nowrap">Операция</div>
<div style="left:1390px;top:253.5px;line-height:20px;color:#4d4d4d;font-size:13px;white-space:nowrap">Номер по б...</div>
<div style="left:1487px;top:253.5px;line-height:20px;color:#4d4d4d;font-size:13px;white-space:nowrap">Дата по банку</div>
<div style="left:1604px;top:253.5px;line-height:20px;color:#4d4d4d;font-size:13px;white-space:nowrap">Платежный докум...</div>
<div style="left:1742px;top:253.5px;line-height:20px;color:#4d4d4d;font-size:13px;white-space:nowrap">Организация</div>
<div style="left:1880px;top:253.5px;line-height:20px;color:#4d4d4d;font-size:13px;white-space:nowrap">Б</div>
<div style="left:253px;top:280px;width:1636px;height:28px;background:#f8f8f8"></div>
<div style="left:253px;top:308px;width:1636px;height:1px;background:#e4e4e4"></div>
<div style="left:795px;top:284.1px;line-height:20px;color:#333333;font-size:13px">руб.</div>
<div style="left:1129px;top:284.1px;line-height:20px;color:#333333;font-size:13px;white-space:nowrap">Розничный пок...</div>
<div style="left:1252px;top:284.1px;line-height:20px;color:#333333;font-size:13px;white-space:nowrap">Поступление опл...</div>
<div style="left:1390px;top:284.1px;line-height:20px;color:#333333;font-size:13px">124</div>
<div style="left:1487px;top:284.1px;line-height:20px;color:#333333;font-size:13px">19.11.2021</div>
<div style="left:1604px;top:284.1px;line-height:20px;color:#333333;font-size:13px;white-space:nowrap">Платежное поруч...</div>
<div style="left:1742px;top:284.1px;line-height:20px;color:#333333;font-size:13px;white-space:nowrap">Ваша организаци...</div>
<div style="left:1880px;top:284.1px;line-height:20px;color:#333333;font-size:13px;white-space:nowrap;width:9px;overflow:hidden">С</div>
<div style="left:253px;top:309px;width:1636px;height:28px;background:#fdf0c4"></div>
<div style="left:253px;top:309px;width:1636px;height:1px;background:#ffffff"></div>
<div style="left:253px;top:336px;width:1636px;height:1px;background:#ffffff"></div>
<div style="left:684px;top:309px;width:1px;height:28px;background:#ffffff"></div>
<div style="left:786px;top:309px;width:1px;height:28px;background:#ffffff"></div>
<div style="left:851px;top:309px;width:1px;height:28px;background:#ffffff"></div>
<div style="left:1120px;top:309px;width:1px;height:28px;background:#ffffff"></div>
<div style="left:1243px;top:309px;width:1px;height:28px;background:#ffffff"></div>
<div style="left:1381px;top:309px;width:1px;height:28px;background:#ffffff"></div>
<div style="left:1478px;top:309px;width:1px;height:28px;background:#ffffff"></div>
<div style="left:1595px;top:309px;width:1px;height:28px;background:#ffffff"></div>
<div style="left:1733px;top:309px;width:1px;height:28px;background:#ffffff"></div>
<div style="left:1871px;top:309px;width:1px;height:28px;background:#ffffff"></div>
<div style="left:253px;top:337px;width:1636px;height:1px;background:#e4e4e4"></div>
<div style="left:688px;top:313.1px;line-height:20px;width:90px;color:#bb2a2e;font-size:13px;text-align:right">8 000,00</div>
<div style="left:795px;top:313.1px;line-height:20px;color:#bb2a2e;font-size:13px">руб.</div>
<div style="left:1129px;top:313.1px;line-height:20px;color:#bb2a2e;font-size:13px;white-space:nowrap">Вайлдберриз, ...</div>
<div style="left:1252px;top:313.1px;line-height:20px;color:#bb2a2e;font-size:13px;white-space:nowrap">Возврат оплаты к...</div>
<div style="left:1390px;top:313.1px;line-height:20px;color:#bb2a2e;font-size:13px">8</div>
<div style="left:1487px;top:313.1px;line-height:20px;color:#bb2a2e;font-size:13px">14.02.2022</div>
<div style="left:1604px;top:313.1px;line-height:20px;color:#bb2a2e;font-size:13px;white-space:nowrap">Платежное поруч...</div>
<div style="left:1742px;top:313.1px;line-height:20px;color:#bb2a2e;font-size:13px;white-space:nowrap">Ваша организаци...</div>
<div style="left:1880px;top:313.1px;line-height:20px;color:#bb2a2e;font-size:13px;white-space:nowrap;width:9px;overflow:hidden">С</div>
<div style="left:253px;top:338px;width:1636px;height:28px;background:#f8f8f8"></div>
<div style="left:253px;top:366px;width:1636px;height:1px;background:#e4e4e4"></div>
<div style="left:688px;top:342.1px;line-height:20px;width:90px;color:#bb2a2e;font-size:13px;text-align:right">1 000,00</div>
<div style="left:795px;top:342.1px;line-height:20px;color:#bb2a2e;font-size:13px">руб.</div>
<div style="left:1129px;top:342.1px;line-height:20px;color:#bb2a2e;font-size:13px;white-space:nowrap">МАРКЕТПЛЕЙ...</div>
<div style="left:1252px;top:342.1px;line-height:20px;color:#bb2a2e;font-size:13px;white-space:nowrap">Оплата поставщику</div>
<div style="left:1390px;top:342.1px;line-height:20px;color:#bb2a2e;font-size:13px">16</div>
<div style="left:1487px;top:342.1px;line-height:20px;color:#bb2a2e;font-size:13px">23.05.2022</div>
<div style="left:1604px;top:342.1px;line-height:20px;color:#bb2a2e;font-size:13px;white-space:nowrap">Платежное поруч...</div>
<div style="left:1742px;top:342.1px;line-height:20px;color:#bb2a2e;font-size:13px;white-space:nowrap">Ваша организаци...</div>
<div style="left:1880px;top:342.1px;line-height:20px;color:#bb2a2e;font-size:13px;white-space:nowrap;width:9px;overflow:hidden">С</div>
<div style="left:253px;top:395px;width:1636px;height:1px;background:#e4e4e4"></div>
<div style="left:688px;top:371.1px;line-height:20px;width:90px;color:#333333;font-size:13px;text-align:right">1 000,00</div>
<div style="left:795px;top:371.1px;line-height:20px;color:#333333;font-size:13px">руб.</div>
<div style="left:1129px;top:371.1px;line-height:20px;color:#333333;font-size:13px;white-space:nowrap">Калинкин Алек...</div>
<div style="left:1252px;top:371.1px;line-height:20px;color:#333333;font-size:13px;white-space:nowrap">Оплата поставщику</div>
<div style="left:1390px;top:371.1px;line-height:20px;color:#333333;font-size:13px">11</div>
<div style="left:1487px;top:371.1px;line-height:20px;color:#333333;font-size:13px">03.03.2022</div>
<div style="left:1604px;top:371.1px;line-height:20px;color:#333333;font-size:13px;white-space:nowrap">Платежное поруч...</div>
<div style="left:1742px;top:371.1px;line-height:20px;color:#333333;font-size:13px;white-space:nowrap">Ваша организаци...</div>
<div style="left:1880px;top:371.1px;line-height:20px;color:#333333;font-size:13px;white-space:nowrap;width:9px;overflow:hidden">С</div>
<div style="left:253px;top:396px;width:1636px;height:28px;background:#f8f8f8"></div>
<div style="left:253px;top:424px;width:1636px;height:1px;background:#e4e4e4"></div>
<div style="left:688px;top:400.1px;line-height:20px;width:90px;color:#333333;font-size:13px;text-align:right">1 200,00</div>
<div style="left:795px;top:400.1px;line-height:20px;color:#333333;font-size:13px">руб.</div>
<div style="left:1129px;top:400.1px;line-height:20px;color:#333333;font-size:13px;white-space:nowrap">Поставщик тов...</div>
<div style="left:1252px;top:400.1px;line-height:20px;color:#333333;font-size:13px;white-space:nowrap">Оплата поставщику</div>
<div style="left:1390px;top:400.1px;line-height:20px;color:#333333;font-size:13px">13</div>
<div style="left:1487px;top:400.1px;line-height:20px;color:#333333;font-size:13px">22.03.2022</div>
<div style="left:1604px;top:400.1px;line-height:20px;color:#333333;font-size:13px;white-space:nowrap">Платежное поруч...</div>
<div style="left:1742px;top:400.1px;line-height:20px;color:#333333;font-size:13px;white-space:nowrap">Ваша организаци...</div>
<div style="left:1880px;top:400.1px;line-height:20px;color:#333333;font-size:13px;white-space:nowrap;width:9px;overflow:hidden">С</div>
<div style="left:253px;top:453px;width:1636px;height:1px;background:#e4e4e4"></div>
<div style="left:795px;top:429.1px;line-height:20px;color:#333333;font-size:13px">руб.</div>
<div style="left:1129px;top:429.1px;line-height:20px;color:#333333;font-size:13px;white-space:nowrap">ИНТЕРНЕТ РЕ...</div>
<div style="left:1252px;top:429.1px;line-height:20px;color:#333333;font-size:13px;white-space:nowrap">Поступление опл...</div>
<div style="left:1390px;top:429.1px;line-height:20px;color:#333333;font-size:13px">1451212</div>
<div style="left:1487px;top:429.1px;line-height:20px;color:#333333;font-size:13px">23.03.2022</div>
<div style="left:1604px;top:429.1px;line-height:20px;color:#333333;font-size:13px;white-space:nowrap">Платежное поруч...</div>
<div style="left:1742px;top:429.1px;line-height:20px;color:#333333;font-size:13px;white-space:nowrap">Ваша организаци...</div>
<div style="left:1880px;top:429.1px;line-height:20px;color:#333333;font-size:13px;white-space:nowrap;width:9px;overflow:hidden">С</div>
<div style="left:253px;top:454px;width:1636px;height:28px;background:#f8f8f8"></div>
<div style="left:253px;top:482px;width:1636px;height:1px;background:#e4e4e4"></div>
<div style="left:688px;top:458.1px;line-height:20px;width:90px;color:#333333;font-size:13px;text-align:right">300,00</div>
<div style="left:795px;top:458.1px;line-height:20px;color:#333333;font-size:13px">руб.</div>
<div style="left:1129px;top:458.1px;line-height:20px;color:#333333;font-size:13px;white-space:nowrap">Точка ПАО Бан...</div>
<div style="left:1252px;top:458.1px;line-height:20px;color:#333333;font-size:13px;white-space:nowrap">Прочий расход ДС</div>
<div style="left:1390px;top:458.1px;line-height:20px;color:#333333;font-size:13px">101201884</div>
<div style="left:1487px;top:458.1px;line-height:20px;color:#333333;font-size:13px">06.04.2022</div>
<div style="left:1604px;top:458.1px;line-height:20px;color:#333333;font-size:13px;white-space:nowrap">Банковский ордер</div>
<div style="left:1742px;top:458.1px;line-height:20px;color:#333333;font-size:13px;white-space:nowrap">Ваша организаци...</div>
<div style="left:1880px;top:458.1px;line-height:20px;color:#333333;font-size:13px;white-space:nowrap;width:9px;overflow:hidden">С</div>
<svg style="position:absolute;left:260px;top:934px;" width="6" height="8" viewBox="0 0 6 8"><path d="M5 0.5 V7.5 L1 4Z" fill="#b0b0b0"/></svg>
<div style="left:276px;top:934px;width:1474px;height:8px;background:#d4d4d4;border-radius:4px"></div>
<div style="left:276px;top:934px;width:1003px;height:8px;background:#9a9a9a;border-radius:4px"></div>
<svg style="position:absolute;left:1760px;top:934px;" width="6" height="8" viewBox="0 0 6 8"><path d="M1 0.5 V7.5 L5 4Z" fill="#333"/></svg>
<div style="left:1793px;top:928px;width:97px;height:22px;border:1px solid #a9a9a9;box-sizing:border-box;background:#fff"></div>
<div style="left:1817px;top:929px;width:1px;height:20px;background:#a9a9a9"></div>
<div style="left:1841px;top:929px;width:1px;height:20px;background:#a9a9a9"></div>
<div style="left:1865px;top:929px;width:1px;height:20px;background:#a9a9a9"></div>
<svg style="position:absolute;left:1800px;top:934px;" width="11" height="10" viewBox="0 0 11 10"><rect x="0.5" y="1.5" width="9.5" height="1.2" fill="#a8a8a8"/><path d="M0.6 7.8 L5.25 3 L9.9 7.8Z" fill="#a8a8a8"/></svg>
<svg style="position:absolute;left:1824px;top:934px;" width="11" height="10" viewBox="0 0 11 10"><path d="M0.6 7.8 L5.25 3 L9.9 7.8Z" fill="#a8a8a8"/></svg>
<svg style="position:absolute;left:1848px;top:934px;" width="11" height="10" viewBox="0 0 11 10"><path d="M0.6 2.8 L5.25 7.6 L9.9 2.8Z" fill="#a8a8a8"/></svg>
<svg style="position:absolute;left:1872px;top:934px;" width="11" height="10" viewBox="0 0 11 10"><path d="M0.6 2.8 L5.25 7.6 L9.9 2.8Z" fill="#a8a8a8"/><rect x="0.5" y="8.3" width="9.5" height="1.2" fill="#a8a8a8"/></svg>
<svg style="position:absolute;left:254px;top:963px;" width="14" height="16" viewBox="0 0 14 16"><path d="M1 1 H9 L12.5 4.5 V15 H1Z" fill="#fff" stroke="#8a9ab0"/><rect x="3.5" y="8" width="1.6" height="5" fill="#d33"/><rect x="6" y="6" width="1.6" height="7" fill="#2a2"/><rect x="8.5" y="9" width="1.6" height="4" fill="#36c"/></svg>
<div style="left:273px;top:961.5px;line-height:20px;color:#1a55b8;font-size:13px;text-decoration:underline">Сверка выписок</div>
<div style="left:647px;top:961.5px;line-height:20px;color:#333333;font-size:13px">За период с 01.03.2022 по 30.04.2022</div>
<div style="left:1150px;top:961.5px;line-height:20px;color:#4d4d4d;font-size:13px;white-space:nowrap">На начало:</div>
<div style="left:1221px;top:959px;width:111px;height:25px;border:1px solid #c8c8c8;border-radius:3px;background:#fff;box-sizing:border-box"></div>
<div style="left:1227px;top:962.0px;line-height:20px;width:101px;color:#333333;font-size:13px;text-align:right">-9 158,70</div>
<div style="left:1342px;top:961.5px;line-height:20px;color:#4d4d4d;font-size:13px;white-space:nowrap">Поступило:</div>
<div style="left:1414px;top:959px;width:111px;height:25px;border:1px solid #c8c8c8;border-radius:3px;background:#fff;box-sizing:border-box"></div>
<div style="left:1420px;top:962.0px;line-height:20px;width:101px;color:#333333;font-size:13px;text-align:right">150,00</div>
<div style="left:1535px;top:961.5px;line-height:20px;color:#4d4d4d;font-size:13px;white-space:nowrap">Списано:</div>
<div style="left:1595px;top:959px;width:111px;height:25px;border:1px solid #c8c8c8;border-radius:3px;background:#fff;box-sizing:border-box"></div>
<div style="left:1601px;top:962.0px;line-height:20px;width:101px;color:#333333;font-size:13px;text-align:right">2 500,00</div>
<div style="left:1716px;top:961.5px;line-height:20px;color:#4d4d4d;font-size:13px;white-space:nowrap">На конец:</div>
<div style="left:1779px;top:959px;width:111px;height:25px;border:1px solid #c8c8c8;border-radius:3px;background:#fff;box-sizing:border-box"></div>
<div style="left:1785px;top:962.0px;line-height:20px;width:101px;color:#333333;font-size:13px;text-align:right">-11 508,70</div>
<div style="left:241px;top:1006.0px;line-height:20px;color:#333333;font-size:13px">Банковский счет руб., Счет, Ваша организация ООО (руб.)</div>
<div style="left:1292px;top:1005.5px;line-height:20px;color:#4d4d4d;font-size:13px;white-space:nowrap">Остаток на счете:</div>
<div style="left:1403px;top:1003px;width:111px;height:25px;border:1px solid #c8c8c8;border-radius:3px;background:#fff;box-sizing:border-box"></div>
<div style="left:1409px;top:1006.0px;line-height:20px;width:101px;color:#333333;font-size:13px;text-align:right">-10 508,70</div>
<div style="left:1524px;top:1005.5px;line-height:20px;color:#4d4d4d;font-size:13px;white-space:nowrap">К списанию:</div>
<div style="left:1604px;top:1003px;width:111px;height:25px;border:1px solid #c8c8c8;border-radius:3px;background:#fff;box-sizing:border-box"></div>
<div style="left:1610px;top:1006.0px;line-height:20px;width:101px;color:#333333;font-size:13px;text-align:right">9 000,00</div>
<div style="left:1725px;top:1005.5px;line-height:20px;color:#4d4d4d;font-size:13px;white-space:nowrap">Доступно:</div>
<div style="left:1790px;top:1003px;width:111px;height:25px;border:1px solid #c8c8c8;border-radius:3px;background:#fff;box-sizing:border-box"></div>
<div style="left:1796px;top:1006.0px;line-height:20px;width:101px;color:#333333;font-size:13px;text-align:right">-19 508,70</div>
<svg style="position:absolute;left:354px;top:205px;" width="25" height="25" viewBox="0 0 25 25"><circle cx="12.1" cy="12" r="10.6" fill="#4389cc" stroke="#336fa8" stroke-width="0.8"/></svg>
<svg style="position:absolute;left:362px;top:213px;filter:drop-shadow(1px 2px 1.5px rgba(0,0,0,0.4))" width="22" height="28" viewBox="0 0 22 28"><path d="M4.5 4.5 V22.5 L8.6 18.6 L11.6 25 L14.2 24 L11.2 17.6 H16.8 Z" fill="#fff" stroke="#000" stroke-width="1.3" stroke-linejoin="miter"/></svg>
<div style="left:255px;top:238px;width:430px;height:559px;background:#fff;box-shadow:0 2px 6px rgba(0,0,0,0.25)"></div>
<div style="left:255px;top:238px;width:430px;height:2px;background:#8f9898"></div>
<div style="left:683px;top:238px;width:2px;height:559px;background:#8a9292"></div>
<div style="left:255px;top:241px;width:427px;height:29px;background:#f8cc2b"></div>
<div style="left:297px;top:244.7px;line-height:20px;color:#3a3a3a;font-size:13px;white-space:nowrap;letter-spacing:-0.12px">Поступление оплаты от клиента</div>
<div style="left:297px;top:274.7px;line-height:20px;color:#3a3a3a;font-size:13px;white-space:nowrap;letter-spacing:-0.12px">Поступление оплаты по эквайрингу</div>
<div style="left:297px;top:304.7px;line-height:20px;color:#3a3a3a;font-size:13px;white-space:nowrap;letter-spacing:-0.12px">Поступление от другой организации</div>
<div style="left:297px;top:334.7px;line-height:20px;color:#3a3a3a;font-size:13px;white-space:nowrap;letter-spacing:-0.12px">Передача между организацией и филиалом</div>
<div style="left:255px;top:362px;width:427px;height:1px;background:#d8d2c2"></div>
<div style="left:297px;top:368.7px;line-height:20px;color:#3a3a3a;font-size:13px;white-space:nowrap;letter-spacing:-0.12px">Поступление с другого счета</div>
<div style="left:297px;top:398.7px;line-height:20px;color:#3a3a3a;font-size:13px;white-space:nowrap;letter-spacing:-0.12px">Сдача наличных в банк</div>
<div style="left:297px;top:428.7px;line-height:20px;color:#3a3a3a;font-size:13px;white-space:nowrap;letter-spacing:-0.12px">Инкассация в банк</div>
<div style="left:255px;top:456px;width:427px;height:1px;background:#d8d2c2"></div>
<div style="left:297px;top:462.7px;line-height:20px;color:#3a3a3a;font-size:13px;white-space:nowrap;letter-spacing:-0.12px">Поступление по кредитам и займам полученным</div>
<div style="left:297px;top:492.7px;line-height:20px;color:#3a3a3a;font-size:13px;white-space:nowrap;letter-spacing:-0.12px">Поступление по депозитам</div>
<div style="left:297px;top:522.7px;line-height:20px;color:#3a3a3a;font-size:13px;white-space:nowrap;letter-spacing:-0.12px">Погашение займа контрагентом</div>
<div style="left:297px;top:552.7px;line-height:20px;color:#3a3a3a;font-size:13px;white-space:nowrap;letter-spacing:-0.12px">Погашение займа сотрудником</div>
<div style="left:255px;top:580px;width:427px;height:1px;background:#d8d2c2"></div>
<div style="left:297px;top:586.7px;line-height:20px;color:#3a3a3a;font-size:13px;white-space:nowrap;letter-spacing:-0.12px">Конвертация валюты</div>
<div style="left:297px;top:616.7px;line-height:20px;color:#3a3a3a;font-size:13px;white-space:nowrap;letter-spacing:-0.12px">Прочее поступление</div>
<div style="left:255px;top:644px;width:427px;height:1px;background:#d8d2c2"></div>
<div style="left:297px;top:650.7px;line-height:20px;color:#3a3a3a;font-size:13px;white-space:nowrap;letter-spacing:-0.12px">Возврат от поставщика</div>
<div style="left:297px;top:680.7px;line-height:20px;color:#3a3a3a;font-size:13px;white-space:nowrap;letter-spacing:-0.12px">Возврат от подотчетника</div>
<div style="left:297px;top:710.7px;line-height:20px;color:#3a3a3a;font-size:13px;white-space:nowrap;letter-spacing:-0.12px">Возврат от другой организации</div>
<div style="left:297px;top:740.7px;line-height:20px;color:#3a3a3a;font-size:13px;white-space:nowrap;letter-spacing:-0.12px">Возврат неперечисленной зарплаты на лицевые счета</div>
<div style="left:297px;top:770.7px;line-height:20px;color:#3a3a3a;font-size:13px;white-space:nowrap;letter-spacing:-0.12px">Возврат по зарплатному проекту</div>
<div style="left:252px;top:235px;width:436px;height:565px;border:3px solid #f53b3b;box-sizing:border-box"></div>
</body></html>
